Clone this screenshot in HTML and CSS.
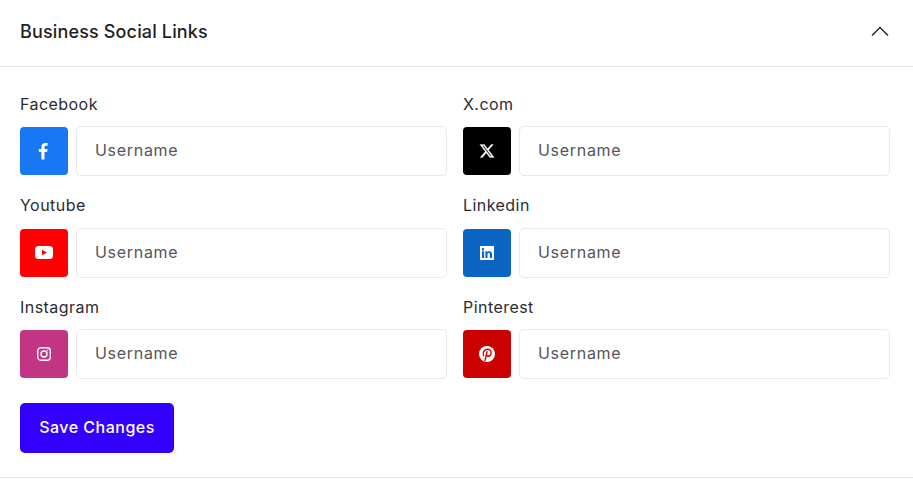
FILE: index.html
```html
<!DOCTYPE html>
<html lang="en">
<head>
    <meta charset="UTF-8">
    <meta name="viewport" content="width=device-width, initial-scale=1.0">
    <title>Business Social Links</title>
    <link rel="stylesheet" href="styles.css">
</head>
<body>
    <section class="panel">
        <div class="panel-header">
            <h2>Business Social Links</h2>
            <svg class="chevron" width="18" height="10" viewBox="0 0 18 10" fill="none"><path d="M1 9.500L9 1.500L17 9.500" stroke="#1b2b4b" stroke-width="1.500"/></svg>
        </div>
        <form class="panel-body">
            <div class="link-grid">
                <div class="form-group">
                    <label for="facebook">Facebook</label>
                    <div class="input-row">
                        <span class="icon-box facebook">
                            <svg width="12" height="18" viewBox="0 0 12 18"><path fill="#fff" d="M3.400 17.500V10H.8V7h2.600V4.900C3.400 2.300 5 1 7.300 1c1.100 0 2 .1 2.300.1v2.600H8c-1.300 0-1.500.6-1.500 1.500V7h3l-.4 3H6.500v7.500z"/></svg>
                        </span>
                        <input type="text" id="facebook" placeholder="Username">
                    </div>
                </div>
                <div class="form-group">
                    <label for="xcom">X.com</label>
                    <div class="input-row">
                        <span class="icon-box xcom">
                            <svg width="16" height="16" viewBox="0 0 24 24"><path fill="#fff" stroke="#fff" stroke-width="0.400" d="M18.244 2.250h3.308l-7.227 8.260 8.502 11.240H16.170l-5.214-6.817L4.990 21.750H1.680l7.730-8.835L1.254 2.250H8.080l4.713 6.231zm-1.161 17.520h1.833L7.084 4.126H5.117z"/></svg>
                        </span>
                        <input type="text" id="xcom" placeholder="Username">
                    </div>
                </div>
                <div class="form-group">
                    <label for="youtube">Youtube</label>
                    <div class="input-row">
                        <span class="icon-box youtube">
                            <svg width="18" height="13" viewBox="0 0 18 13"><rect width="18" height="13" rx="3.500" fill="#fff"/><path fill="#f00" d="M7 3.700L12 6.500L7 9.300z"/></svg>
                        </span>
                        <input type="text" id="youtube" placeholder="Username">
                    </div>
                </div>
                <div class="form-group">
                    <label for="linkedin">Linkedin</label>
                    <div class="input-row">
                        <span class="icon-box linkedin">
                            <svg width="14" height="14" viewBox="0 0 14 14"><path fill="#fff" fill-rule="evenodd" d="M0 0h14v14H0zM2 5.300v6.700h2.100V5.300zM3 2a1.200 1.200 0 1 0 0 2.400A1.200 1.200 0 0 0 3 2zM5.400 5.300v6.700h2.100V8.600c0-.9.300-1.600 1.200-1.600s1.200.7 1.200 1.700V12H12V8.200c0-1.900-1-3-2.600-3-1 0-1.600.5-1.900 1.100v-1z"/></svg>
                        </span>
                        <input type="text" id="linkedin" placeholder="Username">
                    </div>
                </div>
                <div class="form-group">
                    <label for="instagram">Instagram</label>
                    <div class="input-row">
                        <span class="icon-box instagram">
                            <svg width="14" height="14" viewBox="0 0 14 14" fill="none" stroke="#fff" stroke-width="1.400"><rect x=".7" y=".7" width="12.600" height="12.600" rx="3.200"/><circle cx="7" cy="7" r="3"/><circle cx="10.600" cy="3.400" r=".5" fill="#fff" stroke-width=".5"/></svg>
                        </span>
                        <input type="text" id="instagram" placeholder="Username">
                    </div>
                </div>
                <div class="form-group">
                    <label for="pinterest">Pinterest</label>
                    <div class="input-row">
                        <span class="icon-box pinterest">
                            <svg width="16" height="16" viewBox="0 0 16 16"><circle cx="8" cy="8" r="8" fill="#fff"/><path fill="none" stroke="#cb0000" stroke-width="1.400" stroke-linecap="round" d="M4.600 9.600C3.400 7 4.900 3.200 8.300 3.200c2.700 0 4 1.800 3.800 3.900-.2 2.200-1.800 3.500-3.300 3.100-.9-.2-1.300-.9-1.200-1.600M8 5.800L6 14.600"/></svg>
                        </span>
                        <input type="text" id="pinterest" placeholder="Username">
                    </div>
                </div>
            </div>
            <button type="button">Save Changes</button>
        </form>
    </section>
</body>
</html>
```

FILE: styles.css
```css
body {
    margin: 0;
    background-color: #fff;
    font-family: Inter, Arial, sans-serif;
    color: #2b2b33;
}

.panel {
    border-bottom: 1px solid #e6e6e6;
}

.panel-header {
    display: flex;
    align-items: center;
    justify-content: space-between;
    height: 67px;
    padding: 0 24px 4px 20px;
    box-sizing: border-box;
    border-bottom: 1px solid #e6e6e6;
}

    .panel-header h2 {
        margin: 0;
        font-size: 18px;
        font-weight: 500;
        color: #1f1f24;
        letter-spacing: 0.15px;
    }

.panel-body {
    padding: 24.65px 23px 24px 20px;
}

.link-grid {
    display: grid;
    grid-template-columns: 1fr 1fr;
    column-gap: 16px;
    row-gap: 17.1px;
    margin-bottom: 24px;
}

.form-group label {
    display: block;
    margin-bottom: 10.4px;
    font-size: 16px;
    line-height: 24px;
    letter-spacing: 0.45px;
}

.input-row {
    display: flex;
    align-items: center;
    gap: 8px;
}

.icon-box {
    display: flex;
    align-items: center;
    justify-content: center;
    flex: none;
    width: 48px;
    height: 48px;
    border-radius: 4px;
}

.facebook { background-color: #1877f2; }
.xcom { background-color: #000; }
.youtube { background-color: #f00; }
.linkedin { background-color: #0a66c2; }
.instagram { background-color: #c13584; }
.pinterest { background-color: #cb0000; }

input {
    flex: 1;
    min-width: 0;
    height: 50px;
    padding: 0 18px 2px;
    box-sizing: border-box;
    border: 1px solid #e9e9ec;
    border-radius: 5px;
    font-family: inherit;
    font-size: 16px;
    letter-spacing: 0.7px;
}

    input::placeholder {
        color: #55555c;
        opacity: 1;
    }

button {
    display: block;
    width: 154px;
    height: 50px;
    padding: 0 0 2px;
    background-color: #3300ff;
    color: white;
    border: none;
    border-radius: 5px;
    font-family: inherit;
    font-size: 16px;
    font-weight: 500;
    letter-spacing: 0.5px;
    cursor: pointer;
}
```
